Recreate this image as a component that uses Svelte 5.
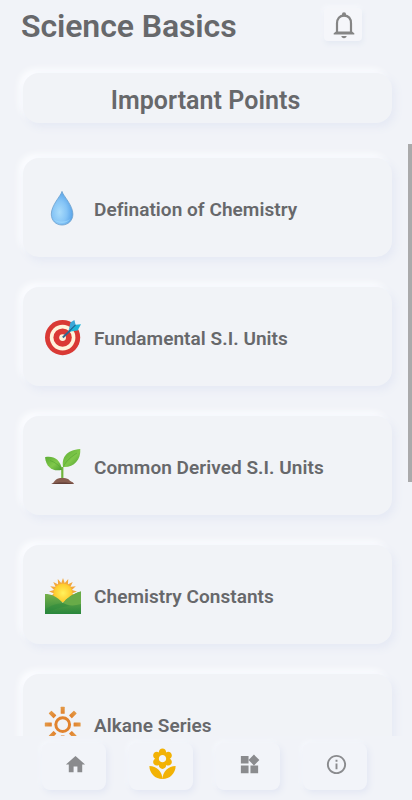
<script lang="ts">
	const topics = [
		{ icon: 'drop', label: 'Defination of Chemistry' },
		{ icon: 'target', label: 'Fundamental S.I. Units' },
		{ icon: 'seedling', label: 'Common Derived S.I. Units' },
		{ icon: 'sunrise', label: 'Chemistry Constants' },
		{ icon: 'sun', label: 'Alkane Series' }
	];

	const tabs = [
		{ name: 'Home', path: 'M10 20v-6h4v6h5v-8h3L12 3 2 12h3v8z' },
		{
			name: 'Topics',
			path: 'M12 22c4.97 0 9-4.03 9-9-4.97 0-9 4.03-9 9zM5.6 10.25c0 1.38 1.12 2.5 2.5 2.5.53 0 1.01-.16 1.42-.44l-.02.19c0 1.38 1.12 2.5 2.5 2.5s2.5-1.12 2.5-2.5l-.02-.19c.4.28.89.44 1.42.44 1.38 0 2.5-1.12 2.5-2.5 0-1-.59-1.85-1.43-2.25.84-.4 1.43-1.25 1.43-2.25 0-1.38-1.12-2.5-2.5-2.5-.53 0-1.01.16-1.42.44l.02-.19C14.5 2.12 13.38 1 12 1S9.5 2.12 9.5 3.5l.02.19c-.4-.28-.89-.44-1.42-.44-1.38 0-2.5 1.12-2.5 2.5 0 1 .59 1.85 1.43 2.25-.84.4-1.43 1.25-1.43 2.25zM12 5.5c1.38 0 2.5 1.12 2.5 2.5s-1.12 2.5-2.5 2.5S9.5 9.38 9.5 8s1.12-2.5 2.5-2.5zM3 13c0 4.97 4.03 9 9 9 0-4.97-4.03-9-9-9z'
		},
		{
			name: 'Widgets',
			path: 'M13 13v8h8v-8h-8zM3 21h8v-8H3v8zM3 3v8h8V3H3zm13.66-1.31L11 7.34 16.66 13l5.66-5.66-5.66-5.65z'
		},
		{
			name: 'About',
			path: 'M11 7h2v2h-2zm0 4h2v6h-2zm1-9C6.48 2 2 6.48 2 12s4.48 10 10 10 10-4.48 10-10S17.52 2 12 2zm0 18c-4.41 0-8-3.59-8-8s3.59-8 8-8 8 3.59 8 8-3.59 8-8 8z'
		}
	];

	let activeTab = $state('Topics');

	const rays = [0, 45, 90, 135, 180, 225, 270, 315];
	const sunriseRays = [-110, -88, -66, -44, -22, 0, 22, 44, 66, 88, 110];
</script>

<div class="screen">
	<header>
		<h1>Science Basics</h1>
		<button class="bell" aria-label="Notifications">
			<svg viewBox="0 0 24 28">
				<path d="M5 22V12.500C5 7.500 7.600 4.600 12 4.600s7 2.900 7 7.900V22" fill="none" stroke="#858585" stroke-width="2.200" />
				<path d="M1.700 23.600v-1.300l2.300-1.700h16l2.300 1.700v1.300zM9.400 25h5.200c0 1.400-1.100 2.200-2.600 2.200S9.400 26.400 9.400 25z" fill="#858585" />
				<circle cx="12" cy="3.400" r="2.100" fill="#858585" />
			</svg>
		</button>
	</header>

	<main>
		<h2 class="raised">Important Points</h2>

		{#each topics as topic}
			<div class="card raised">
				<svg class="icon" viewBox="0 0 36 36">
					{#if topic.icon === 'drop'}
						<defs>
							<radialGradient id="water" cx="38%" cy="62%" r="62%">
								<stop offset="0" stop-color="#a9dcfb" />
								<stop offset=".55" stop-color="#85c4f6" />
								<stop offset="1" stop-color="#58a3e8" />
							</radialGradient>
						</defs>
						<path d="M17 .4C16 4.600 6.300 14.200 6.300 23.100c0 6.500 4.600 10.900 10.700 10.900s10.900-4.400 10.900-10.900C27.900 14.200 18 4.600 17 .4z" fill="url(#water)" stroke="#6b9fcd" stroke-width=".8" />
						<path d="M8.500 28c3 5 13.500 6 17-.5-3 3.700-12 4.300-17 .5z" fill="#a8e1ff" opacity=".5" />
					{:else if topic.icon === 'target'}
						<circle cx="17.600" cy="17.600" r="17.600" fill="#d93935" />
						<circle cx="17.600" cy="17.600" r="12.800" fill="#fff3dc" />
						<circle cx="17.600" cy="17.600" r="9.200" fill="#da3935" />
						<circle cx="17.600" cy="17.600" r="3.400" fill="#fff3dc" />
						<path d="M17.800 17.500L28 7.800" stroke="#2f6790" stroke-width="1.900" />
						<path d="M23.600 10.700L25.400 2.500l4-2.500 1.200 4.800z" fill="#3ba8d8" />
						<path d="M24 11.700L30.600 4.800l5.400-.6-3.400 6.300z" fill="#20b4d7" />
						<path d="M23.800 11.600l6.800-6.800" stroke="#196b9b" stroke-width="1.100" />
					{:else if topic.icon === 'seedling'}
						<defs>
							<linearGradient id="leaf" x2="1" y2="1">
								<stop offset="0" stop-color="#5cac35" />
								<stop offset=".55" stop-color="#80c84a" />
								<stop offset="1" stop-color="#4b9c30" />
							</linearGradient>
						</defs>
						<path d="M17.300 31V18" stroke="#70b53c" stroke-width="2.200" />
						<path d="M18 18C16.500 9 21 .8 35.300 0 36 11.500 28 19 18 18z" fill="url(#leaf)" />
						<path d="M17 20.800C15.500 10 8 6.500 0 8.200 1.200 18.500 8 23 17 20.800z" fill="url(#leaf)" />
						<path d="M17 21C15 17 10 13 5 11.500M18.500 17.500C20 13 27 7 32 4" fill="none" stroke="#5aa935" stroke-width=".7" />
						<path d="M6.300 35c3.200-1.100 3-4.600 6.900-5.600 3.500-1 8.200-.4 10.300.8 1.600 2.600 4.700 2.200 5.500 4.800z" fill="#875d50" />
						<path d="M6.300 35c4-2.100 18-2.100 22.700 0z" fill="#634139" />
					{:else if topic.icon === 'sunrise'}
						<defs>
							<linearGradient id="hill" x2="0" y2="1">
								<stop offset="0" stop-color="#80b64c" />
								<stop offset="1" stop-color="#28863c" />
							</linearGradient>
							<radialGradient id="glow">
								<stop offset="0" stop-color="#fff25d" />
								<stop offset="1" stop-color="#ffc82a" />
							</radialGradient>
						</defs>
						{#each sunriseRays as angle}
							<path d="M15.800 6.500L18 0l2.200 6.500z" fill="#f3a83c" transform="rotate({angle} 18 14)" />
						{/each}
						<circle cx="18" cy="15" r="9.500" fill="url(#glow)" />
						<path d="M0 16c6.500 0 11.500 2.300 18 9 4.500-5 10-9.600 18-11.500V36H0z" fill="url(#hill)" />
						<path d="M18 25c4-5 10-9.600 18-11.500V26c-7 2-12 2-18-1z" fill="#68ab48" />
						<path d="M0 32c6-5 11-6 18-7l6 3c-8 1-16 3-24 8z" fill="#28863c" opacity=".4" />
					{:else}
						<defs>
							<linearGradient id="orange" x2="0" y2="1">
								<stop offset="0" stop-color="#e39a48" />
								<stop offset="1" stop-color="#e1822d" />
							</linearGradient>
						</defs>
						<circle cx="17.700" cy="17.600" r="6.900" fill="none" stroke="#e1832e" stroke-width="3" />
						{#each rays as angle}
							<rect x="15.700" y="-.3" width="4" height="7" rx=".5" fill="url(#orange)" transform="rotate({angle} 17.700 17.600)" />
						{/each}
					{/if}
				</svg>
				<span>{topic.label}</span>
			</div>
		{/each}
	</main>

	<nav>
		{#each tabs as tab}
			<button class:active={activeTab === tab.name} aria-label={tab.name} onclick={() => (activeTab = tab.name)}>
				<svg viewBox="0 0 24 24"><path d={tab.path} /></svg>
			</button>
		{/each}
	</nav>

	<div class="scrollbar"></div>
</div>

<style>
	:global(body) {
		background: #f1f3f8;
	}

	.screen {
		position: relative;
		display: flex;
		flex-direction: column;
		height: 800px;
		overflow: hidden;
		background: #f1f3f8;
		color: #67686b;
		font-family: Roboto, sans-serif;
		font-variant-ligatures: none;
	}

	button {
		display: flex;
		align-items: center;
		justify-content: center;
		padding: 0;
		border: 0;
		background: #f2f4f9;
	}

	header {
		display: flex;
		flex: none;
		align-items: flex-start;
		justify-content: space-between;
		height: 53px;
		padding: 8px 50px 0 21px;
		box-sizing: border-box;
	}

	h1 {
		margin: 0;
		font-size: 32px;
		font-weight: 600;
		letter-spacing: -0.1px;
		line-height: 37px;
	}

	.bell {
		width: 38px;
		height: 33px;
		padding-left: 1px;
		border-radius: 4px;
		background: #f5f6fa;
		box-shadow: 1px 3px 5px #e5eaf3, -1px -2px 4px #f7f8fc;
	}

	.bell svg {
		width: 24px;
		height: 28px;
	}

	main {
		flex: 1;
		min-height: 0;
		padding: 20px 20px 0 23px;
		overflow: hidden;
	}

	.raised {
		background: #f1f3f7;
		box-shadow: 3px 4px 8px #e5e9f4, -4px -4px 6px #fcfdff;
	}

	h2 {
		height: 50px;
		margin: 0 0 35px;
		padding: 3px 4px 0 0;
		box-sizing: border-box;
		border-radius: 16px;
		font-size: 25px;
		font-weight: 600;
		letter-spacing: 0.05px;
		line-height: 50px;
		text-align: center;
	}

	.card {
		display: flex;
		align-items: center;
		gap: 13px;
		height: 99px;
		margin-bottom: 30px;
		padding: 3px 22px 0;
		box-sizing: border-box;
		border-radius: 16px;
		font-size: 19px;
		font-weight: 600;
		letter-spacing: 0.05px;
	}

	.icon {
		flex: none;
		width: 36px;
		height: 36px;
		overflow: visible;
	}

	nav {
		display: flex;
		flex: none;
		gap: 23px;
		height: 64px;
		padding: 7px 42px 0;
		box-sizing: border-box;
		background: #f1f3f8;
	}

	nav button {
		width: 64px;
		height: 47px;
		padding: 0 0 4px 2px;
		box-sizing: border-box;
		border-radius: 8px;
		box-shadow: 2px 3px 6px #e3e7f3, -2px -2px 4px #f6f8fc;
	}

	nav svg {
		width: 23px;
		height: 23px;
		fill: #8a8b8e;
	}

	nav .active svg {
		width: 35px;
		height: 35px;
		fill: #f2b205;
	}

	/* floats over the right edge of the list */
	.scrollbar {
		position: absolute;
		top: 144px;
		right: 0;
		width: 4px;
		height: 338px;
		background: #aaaaab;
	}
</style>
